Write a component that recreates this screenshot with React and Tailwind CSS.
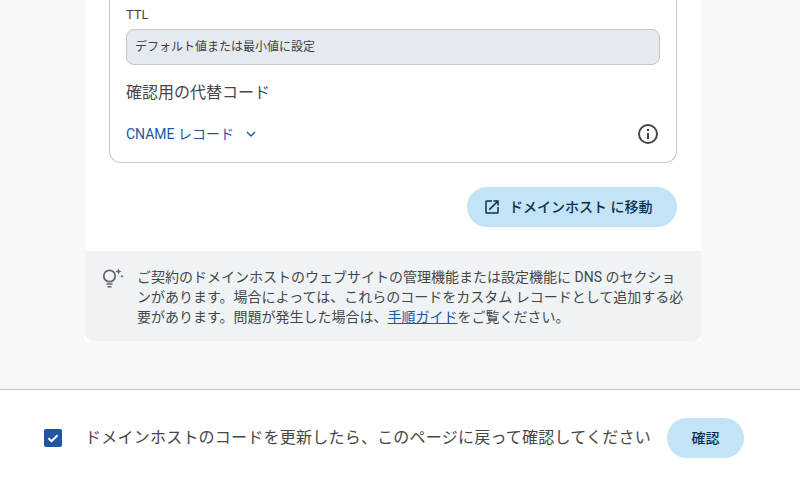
const jp = "font-['Roboto','Noto_Sans_CJK_JP',sans-serif]";

const ExternalIcon = () => (
  <svg width="18" height="18" viewBox="0 0 24 24" fill="#0b2f4a">
    <path d="M19 19H5V5h7V3H5a2 2 0 0 0-2 2v14a2 2 0 0 0 2 2h14a2 2 0 0 0 2-2v-7h-2v7zM14 3v2h3.59l-9.83 9.83 1.41 1.41L19 6.41V10h2V3h-7z" />
  </svg>
);

const InfoIcon = () => (
  <svg width="24" height="24" viewBox="0 0 24 24" fill="#444746">
    <path d="M11 7h2v2h-2zm0 4h2v6h-2zm1-9a10 10 0 1 0 0 20 10 10 0 0 0 0-20zm0 18a8 8 0 1 1 0-16 8 8 0 0 1 0 16z" />
  </svg>
);

const BulbIcon = () => (
  <svg width="24" height="24" viewBox="0 0 24 24" fill="none">
    <circle cx="8.5" cy="9" r="5.7" stroke="#5f6368" strokeWidth="1.7" />
    <path d="M5.5 17h6M6.5 19.8h4" stroke="#5f6368" strokeWidth="1.6" />
    <path d="M17.5 1.5l.9 2.1 2.1.9-2.1.9-.9 2.1-.9-2.1-2.1-.9 2.1-.9zM21 7.5l.5 1.2 1.2.5-1.2.5-.5 1.2-.5-1.2-1.2-.5 1.2-.5z" fill="#5f6368" />
  </svg>
);

const App = () => {
  return (
    <div className={`h-[478px] w-[800px] overflow-hidden flex flex-col bg-[#f7f8fa] ${jp}`}>
      <div className="h-[389px] shrink-0">
        <div className="w-[616px] ml-[85px] bg-white">
          <div className="px-6">
            <div className="h-[163px] border border-t-0 border-[#c4c7c5] rounded-b-xl px-4 flex flex-col">
              <div className="mt-[6px] text-[13px] leading-[18px] text-[#444746]">TTL</div>
              <div className="mt-[5px] h-[36px] rounded-lg border border-[#c4c7c5] bg-[#e5eaf1] px-2 flex items-center text-[12px] text-[#3c4043]">
                デフォルト値または最小値に設定
              </div>
              <div className="mt-[17px] text-[16px] leading-[22px] text-[#444746]">確認用の代替コード</div>
              <div className="mt-[18px] flex items-center justify-between">
                <div className="flex items-center text-[14px] text-[#1c57a0]">
                  CNAME レコード
                  <svg className="ml-[10px]" width="14" height="14" viewBox="0 0 14 14" fill="none" stroke="#1c57a0" strokeWidth="1.4">
                    <path d="M3 5l4 4 4-4" />
                  </svg>
                </div>
                <InfoIcon />
              </div>
            </div>
            <div className="h-[88px] flex justify-end items-start pt-6">
              <button className="h-10 w-[210px] rounded-full bg-[#c2e4f6] flex items-center pl-4 gap-[8px] text-[14px] font-medium text-[#0b2f4a]">
                <ExternalIcon />
                ドメインホスト に移動
              </button>
            </div>
          </div>
          <div className="h-[90px] bg-[#eff3f5] rounded-b-lg flex pl-4 pr-4 pt-4 gap-3">
            <div className="shrink-0 w-6">
              <BulbIcon />
            </div>
            <p className="text-[14px] leading-[20px] text-[#444746]">
              ご契約のドメインホストのウェブサイトの管理機能または設定機能に DNS のセクションがあります。場合によっては、これらのコードをカスタム レコードとして追加する必要があります。問題が発生した場合は、
              <a className="text-[#1c57a0] underline">手順ガイド</a>
              をご覧ください。
            </p>
          </div>
        </div>
      </div>
      <div className="flex-1 bg-white border-t border-[#c4c7c5] flex items-center pl-[44px] pt-2">
        <div className="w-[18px] h-[18px] rounded-[2px] bg-[#1f56a4] flex items-center justify-center">
          <svg width="14" height="14" viewBox="0 0 14 14" fill="none" stroke="white" strokeWidth="2">
            <path d="M2.5 7.2l3 3 6-6" />
          </svg>
        </div>
        <span className="ml-[23px] text-[16px] tracking-[0.23px] text-[#444746]">ドメインホストのコードを更新したら、このページに戻って確認してください</span>
        <button className="ml-[16px] h-10 w-[77px] rounded-full bg-[#c2e4f6] text-[14px] font-medium text-[#0b2f4a]">確認</button>
      </div>
    </div>
  );
};

export default App;
